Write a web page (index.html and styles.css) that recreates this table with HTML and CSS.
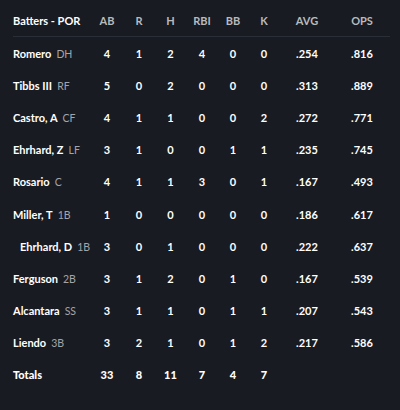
FILE: index.html
```html
<!DOCTYPE html>
<html>
<head>
<meta charset="utf-8">
<link rel="stylesheet" href="styles.css">
</head>
<body>
<div class="box">
  <div class="row head">
    <div class="name">Batters - POR</div>
    <div>AB</div><div>R</div><div>H</div><div>RBI</div><div>BB</div><div>K</div><div>AVG</div><div>OPS</div>
  </div>
  <div class="row"><div class="name">Romero<span class="pos">DH</span></div><div>4</div><div>1</div><div>2</div><div>4</div><div>0</div><div>0</div><div>.254</div><div>.816</div></div>
  <div class="row"><div class="name">Tibbs III<span class="pos">RF</span></div><div>5</div><div>0</div><div>2</div><div>0</div><div>0</div><div>0</div><div>.313</div><div>.889</div></div>
  <div class="row"><div class="name">Castro, A<span class="pos">CF</span></div><div>4</div><div>1</div><div>1</div><div>0</div><div>0</div><div>2</div><div>.272</div><div>.771</div></div>
  <div class="row"><div class="name">Ehrhard, Z<span class="pos">LF</span></div><div>3</div><div>1</div><div>0</div><div>0</div><div>1</div><div>1</div><div>.235</div><div>.745</div></div>
  <div class="row"><div class="name">Rosario<span class="pos">C</span></div><div>4</div><div>1</div><div>1</div><div>3</div><div>0</div><div>1</div><div>.167</div><div>.493</div></div>
  <div class="row"><div class="name">Miller, T<span class="pos">1B</span></div><div>1</div><div>0</div><div>0</div><div>0</div><div>0</div><div>0</div><div>.186</div><div>.617</div></div>
  <div class="row"><div class="name sub">Ehrhard, D<span class="pos">1B</span></div><div>3</div><div>0</div><div>1</div><div>0</div><div>0</div><div>0</div><div>.222</div><div>.637</div></div>
  <div class="row"><div class="name">Ferguson<span class="pos">2B</span></div><div>3</div><div>1</div><div>2</div><div>0</div><div>1</div><div>0</div><div>.167</div><div>.539</div></div>
  <div class="row"><div class="name">Alcantara<span class="pos">SS</span></div><div>3</div><div>1</div><div>1</div><div>0</div><div>1</div><div>1</div><div>.207</div><div>.543</div></div>
  <div class="row"><div class="name">Liendo<span class="pos">3B</span></div><div>3</div><div>2</div><div>1</div><div>0</div><div>1</div><div>2</div><div>.217</div><div>.586</div></div>
  <div class="row total"><div class="name">Totals</div><div>33</div><div>8</div><div>11</div><div>7</div><div>4</div><div>7</div><div></div><div></div></div>
</div>
</body>
</html>
```
FILE: styles.css
```css
html, body {
  margin: 0;
  padding: 0;
  background: #181b21;
}
body {
  width: 400px;
  height: 410px;
  overflow: hidden;
  font-family: "Lato", "Liberation Sans", sans-serif;
  color: #ffffff;
}
.box {
  padding: 0 10px 0 13px;
}
.row {
  display: grid;
  grid-template-columns: 78px 32px 32px 31px 32px 30px 32px 54px 56px;
  align-items: center;
  height: 32.2px;
  font-size: 11px;
  font-weight: 700;
  text-align: center;
}
.row .name {
  text-align: left;
  white-space: nowrap;
}
.row .name.sub {
  padding-left: 7px;
}
.head {
  box-sizing: border-box;
  padding-top: 14px;
  align-items: start;
  line-height: 14px;
  border-bottom: 1px solid #2a2e36;
  height: 37px;
  color: #b8babe;
}
.head .name {
  color: #ffffff;
}
.pos {
  font-weight: 400;
  font-size: 10.5px;
  color: #a3a5aa;
  margin-left: 5px;
}
.total {
  font-weight: 900;
}
```
